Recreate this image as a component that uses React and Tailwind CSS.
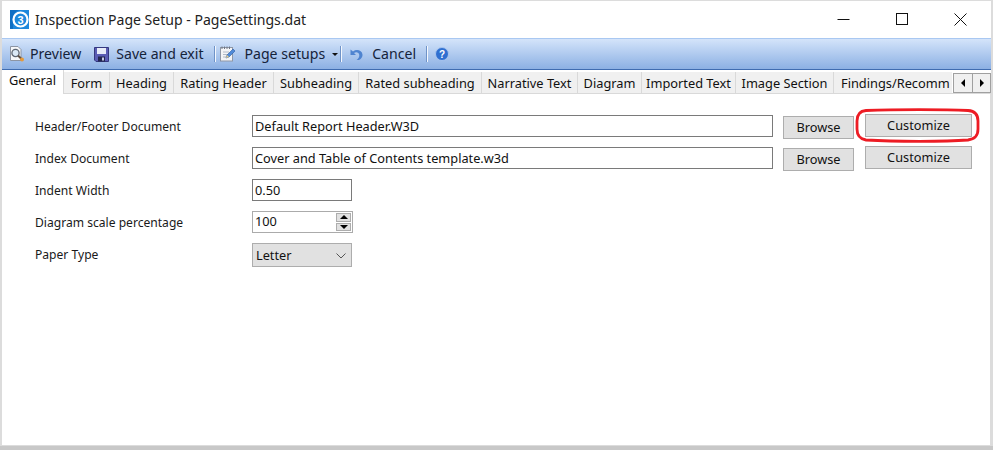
const font = { fontFamily: '"Noto Sans", sans-serif' };

function AppIcon() {
  return (
    <svg width="19" height="19" viewBox="0 0 19 19" className="shrink-0">
      <rect width="19" height="19" fill="#1e88dc" />
      <path d="M3 19V8A8 8 0 0 1 11 0H0V19Z" fill="#0f6fc4" />
      <circle cx="10.5" cy="9.5" r="7" fill="none" stroke="#fff" strokeWidth="2.2" />
      <text x="10.5" y="13.5" fontSize="11" fontWeight="700" fill="#fff" textAnchor="middle" fontFamily="Liberation Sans, sans-serif">3</text>
    </svg>
  );
}

function PreviewIcon() {
  return (
    <svg width="16" height="18" viewBox="0 0 16 18" className="shrink-0">
      <path d="M1.5 1.5H9L12 4.5V15.5H1.5Z" fill="#f6f7f9" stroke="#8d95a3" />
      <circle cx="6.5" cy="8" r="3.6" fill="#dbe9f6" stroke="#5d6673" strokeWidth="1.3" />
      <path d="M9 10.5L13 14.5" stroke="#5d5044" strokeWidth="2" />
      <circle cx="13" cy="14.5" r="2" fill="#e59a3c" />
    </svg>
  );
}

function SaveIcon() {
  return (
    <svg width="15" height="15" viewBox="0 0 15 15" className="shrink-0">
      <path d="M0.5 0.5H14.5V14.5H2L0.5 13Z" fill="#5a5cb4" stroke="#35387f" />
      <rect x="3" y="1" width="9" height="6" fill="#e8ecf8" />
      <rect x="4" y="9.5" width="7" height="5" fill="#23264f" />
      <rect x="8" y="10.5" width="2" height="3" fill="#c7cbe6" />
    </svg>
  );
}

function SetupIcon() {
  return (
    <svg width="16" height="16" viewBox="0 0 16 16" className="shrink-0">
      <rect x="0.5" y="1.5" width="12" height="13.5" fill="#f3f4f6" stroke="#8f97a6" />
      <path d="M2 0.5V3M4.5 0.5V3M7 0.5V3M9.5 0.5V3" stroke="#6e7685" />
      <path d="M3 6H9M3 8.5H8M3 11H7" stroke="#b3bac6" />
      <path d="M6 12L7 9L13 3L15 5L9 11Z" fill="#4f8ad8" stroke="#2b5ca3" strokeWidth="0.6" />
      <path d="M6 12L7 9L9 11Z" fill="#f0d18a" />
    </svg>
  );
}

function UndoIcon() {
  return (
    <svg width="13" height="13" viewBox="0 0 13 13" className="shrink-0">
      <path d="M0.5 1.5V7H6L4 5C6 3.6 9 4.2 9.3 7C9.5 9 8.4 10.6 6.5 12H9C11.5 10.5 12.8 8.6 12.5 6.4C12 2.6 7 0.6 3 3.4Z" fill="#4f84d0" />
    </svg>
  );
}

function HelpIcon() {
  return (
    <svg width="14" height="14" viewBox="0 0 14 14" className="shrink-0">
      <circle cx="7" cy="7" r="6.5" fill="#2f6fd0" stroke="#a9c5ee" />
      <text x="7" y="10.5" fontSize="10" fontWeight="700" fill="#fff" textAnchor="middle" fontFamily="Liberation Sans, sans-serif">?</text>
    </svg>
  );
}

function Sep() {
  return <div className="w-px h-[16px] bg-[#f4f8fe] border-l border-[#6f93c8] box-content" />;
}

const tabs = [
  ["Form", "w-[46px]"],
  ["Heading", "w-[64px]"],
  ["Rating Header", "w-[100px]"],
  ["Subheading", "w-[85px]"],
  ["Rated subheading", "w-[123px]"],
  ["Narrative Text", "w-[96px]"],
  ["Diagram", "w-[64px]"],
  ["Imported Text", "w-[94px]"],
  ["Image Section", "w-[98px]"],
];

function Btn({ children, className }) {
  return (
    <div className={"h-[23px] pt-px flex items-center justify-center bg-[#e1e1e1] border border-[#adadad] text-[12.75px] text-[#111] " + className}>
      {children}
    </div>
  );
}

function Field({ children, className }) {
  return (
    <div className={"h-[22px] mt-px pt-px flex items-center pl-[2px] bg-white border border-[#7a7a7a] text-[12.75px] text-[#111] whitespace-nowrap " + className}>
      {children}
    </div>
  );
}

function Label({ children }) {
  return <div className="w-[217px] h-[24px] pt-[2px] flex items-center text-[12.1px] text-[#1a1a1a] whitespace-nowrap">{children}</div>;
}

export default function App() {
  return (
    <div style={font} className="relative w-[993px] h-[450px] overflow-hidden bg-[#c8c8c8] flex flex-col">
      <div className="h-[446px] flex flex-col bg-white border-t border-l-2 border-r-2 border-b border-[#dcdcdc]">
        {/* Title bar */}
        <div className="h-[37px] flex items-center shrink-0 pl-[8px]">
          <AppIcon />
          <span className="ml-[6px] text-[14.05px] text-[#222]">Inspection Page Setup - PageSettings.dat</span>
          <div className="ml-auto flex items-center pr-[24px] gap-[46px] -mt-px">
            <svg width="13" height="13" viewBox="0 0 13 13"><path d="M0.5 6.5H12.5" stroke="#111" /></svg>
            <svg width="12" height="12" viewBox="0 0 12 12"><rect x="0.5" y="0.5" width="11" height="11" fill="none" stroke="#111" /></svg>
            <svg width="13" height="13" viewBox="0 0 13 13"><path d="M0.5 0.5L12.5 12.5M12.5 0.5L0.5 12.5" stroke="#111" /></svg>
          </div>
        </div>
        {/* Toolbar */}
        <div className="h-[32px] shrink-0 flex items-center pl-[7px] bg-gradient-to-b from-[#d4e4fa] to-[#8cb0e3] border-t border-[#a9c8f2] border-b border-b-[#3f6cb0] text-[14.1px] text-[#15233a]">
          <PreviewIcon />
          <span className="ml-[5px]">Preview</span>
          <div className="ml-[13px]"><SaveIcon /></div>
          <span className="ml-[7px]">Save and exit</span>
          <div className="ml-[10px]"><Sep /></div>
          <div className="ml-[4px]"><SetupIcon /></div>
          <span className="ml-[9px]">Page setups</span>
          <div className="ml-[7px] w-0 h-0 border-x-[3px] border-x-transparent border-t-[3px] border-t-[#111]" />
          <div className="ml-[2px]"><Sep /></div>
          <div className="ml-[8px]"><UndoIcon /></div>
          <span className="ml-[9px]">Cancel</span>
          <div className="ml-[10px]"><Sep /></div>
          <div className="ml-[7px]"><HelpIcon /></div>
        </div>
        {/* Tabs */}
        <div className="h-[24px] shrink-0 flex items-end relative text-[12.8px] text-[#111]">
          <div className="w-[62px] h-[24px] pb-[3px] flex items-center justify-center bg-white border-r border-[#d9d9d9] z-10">General</div>
          <div className="flex flex-1 h-[22px] border-b border-[#d9d9d9] overflow-hidden">
            {tabs.map(([t, w]) => (
              <div key={t} className={w + " shrink-0 pt-[2px] flex items-center justify-center bg-[#f0f0f0] border-r border-[#d9d9d9] whitespace-nowrap"}>{t}</div>
            ))}
            <div className="w-[118px] shrink-0 pl-[7px] pt-[2px] flex items-center bg-[#f0f0f0] whitespace-nowrap overflow-hidden">Findings/Recomm</div>
          </div>
          <div className="absolute right-0 bottom-[1px] flex h-[20px]">
            <div className="w-[20px] flex items-center justify-center bg-[#f0f0f0] border border-[#a0a0a0]">
              <div className="w-0 h-0 border-y-[4px] border-y-transparent border-r-[4px] border-r-black" />
            </div>
            <div className="w-[18px] flex items-center justify-center bg-[#f0f0f0] border border-l-0 border-[#a0a0a0]">
              <div className="w-0 h-0 border-y-[4px] border-y-transparent border-l-[4px] border-l-black" />
            </div>
          </div>
        </div>
        {/* Form */}
        <div className="flex-1 relative pt-[20px] pl-[33px] border-r border-[#dcdcdc]">
          <div className="h-[32px] flex items-start">
            <Label>Header/Footer Document</Label>
            <Field className="w-[521px]">Default Report Header.W3D</Field>
            <Btn className="w-[71px] ml-[10px] mt-[2px]">Browse</Btn>
            <Btn className="w-[107px] ml-[11px]">Customize</Btn>
          </div>
          <div className="h-[32px] flex items-start">
            <Label>Index Document</Label>
            <Field className="w-[521px]">Cover and Table of Contents template.w3d</Field>
            <Btn className="w-[71px] ml-[10px] mt-[2px]">Browse</Btn>
            <Btn className="w-[107px] ml-[11px]">Customize</Btn>
          </div>
          <div className="h-[32px] flex items-start">
            <Label>Indent Width</Label>
            <Field className="w-[100px]">0.50</Field>
          </div>
          <div className="h-[32px] flex items-start">
            <Label>Diagram scale percentage</Label>
            <div className="w-[101px] h-[22px] mt-px flex items-center justify-between pl-[2px] pr-px bg-white border border-[#ababab] text-[12.75px] text-[#111]">
              <span>100</span>
              <div className="w-[15px] h-[18px] flex flex-col gap-px">
                <div className="flex-1 flex items-center justify-center bg-[#e1e1e1] border border-[#adadad]">
                  <div className="w-0 h-0 border-x-[4px] border-x-transparent border-b-[4px] border-b-black" />
                </div>
                <div className="flex-1 flex items-center justify-center bg-[#e1e1e1] border border-[#adadad]">
                  <div className="w-0 h-0 border-x-[4px] border-x-transparent border-t-[4px] border-t-black" />
                </div>
              </div>
            </div>
          </div>
          <div className="h-[32px] flex items-start">
            <Label>Paper Type</Label>
            <div className="w-[100px] h-[24px] mt-px pt-px flex items-center justify-between pl-[3px] pr-[5px] bg-[#e1e1e1] border border-[#adadad] text-[12.75px] text-[#111]">
              <span>Letter</span>
              <svg width="10" height="6" viewBox="0 0 10 6"><path d="M0.5 0.5L5 5L9.5 0.5" fill="none" stroke="#555" /></svg>
            </div>
          </div>
        </div>
      </div>
      {/* Red annotation */}
      <svg width="125" height="35" viewBox="0 0 125 35" className="absolute left-[855px] top-[108px]">
        <path d="M11 2.5C40 1.2 90 1.2 113 2.5C120 3 123 7 123 13V21C123 28 120 31 113 32C90 33.8 40 33.8 11 32C5 31 2 28 2 21V13C2 7 5 3 11 2.5Z" fill="none" stroke="#ed1c24" strokeWidth="2.8" />
      </svg>
    </div>
  );
}
